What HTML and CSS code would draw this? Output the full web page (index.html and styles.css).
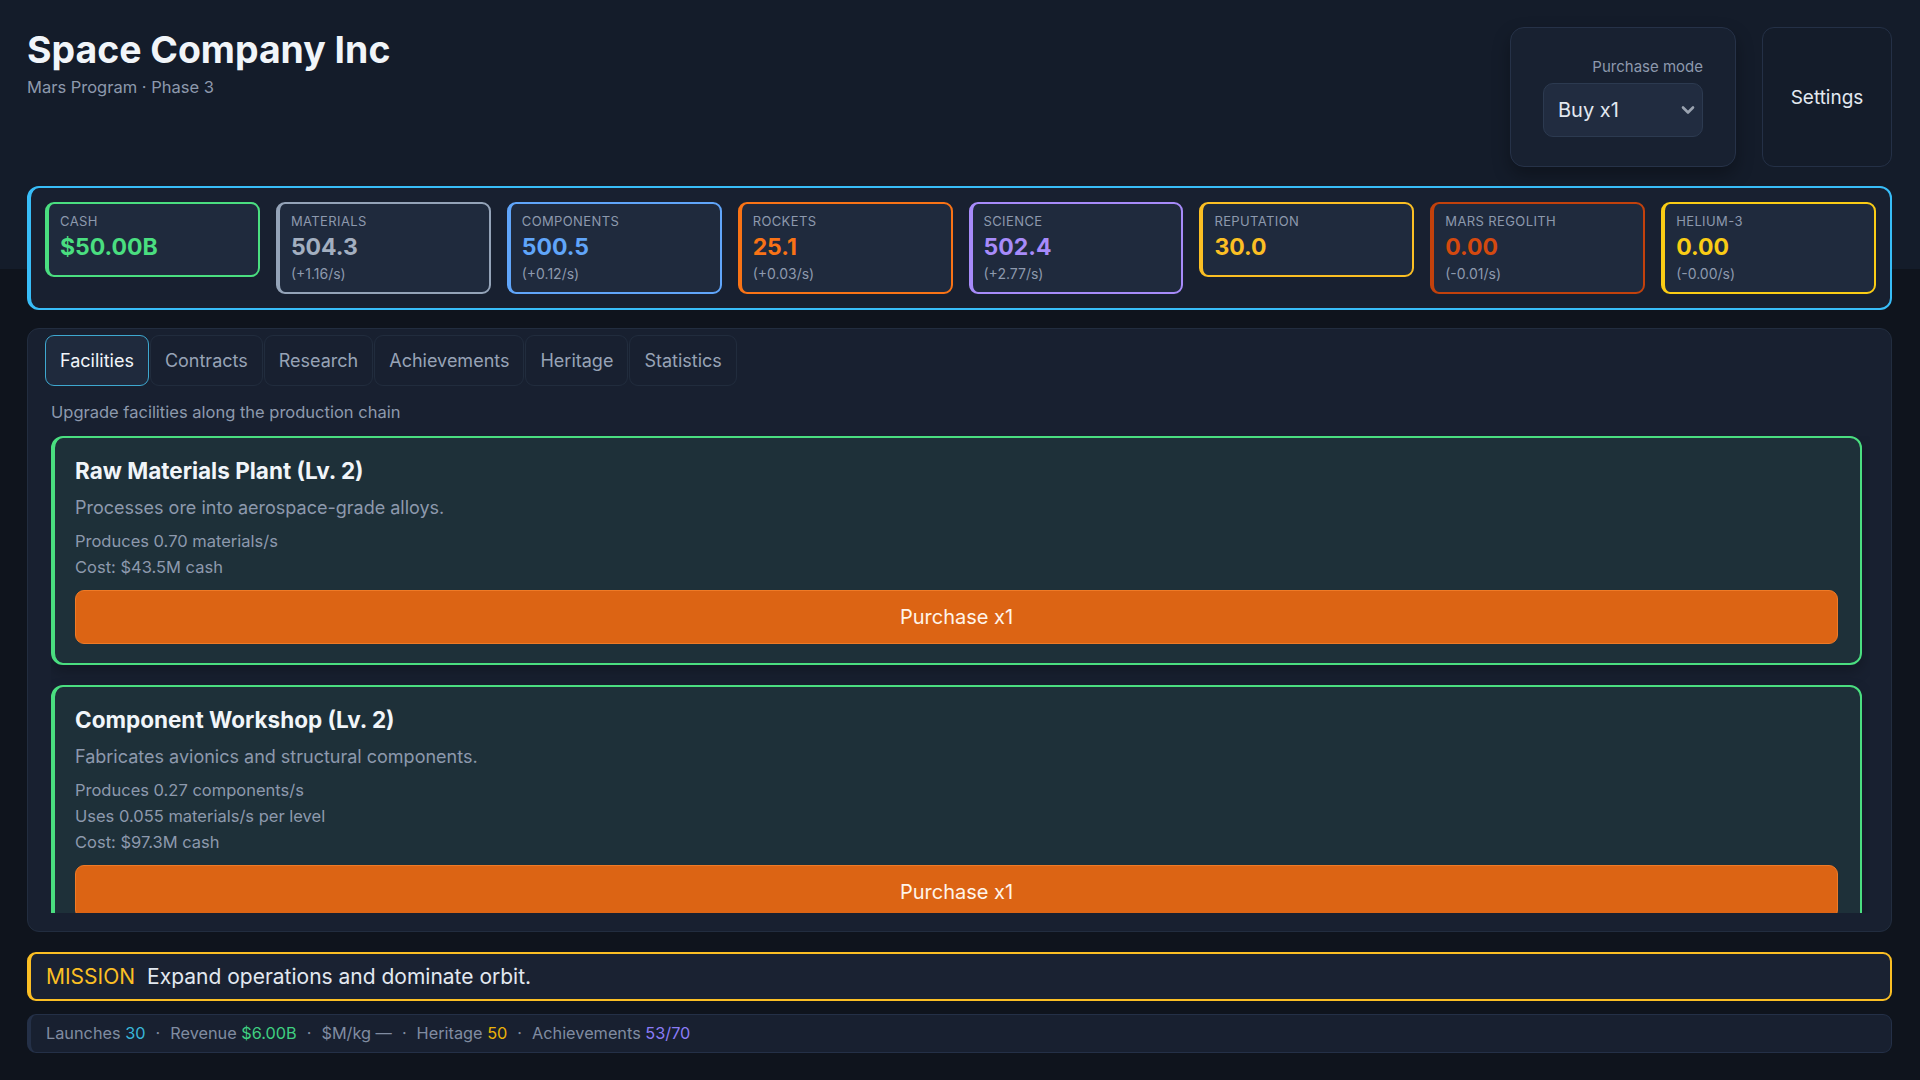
FILE: index.html
```html
<!DOCTYPE html>
<html lang="en">
<head>
    <meta charset="UTF-8">
    <meta name="viewport" content="width=device-width, initial-scale=1.0">
    <title>Space Company Inc</title>
    <link rel="stylesheet" href="styles.css">
</head>
<body>
    <div class="app">
        <header class="header">
            <div class="brand">
                <h1>Space Company Inc</h1>
                <p>Mars Program · Phase 3</p>
            </div>
            <div class="header-actions">
                <div class="mode-box">
                    <label for="buyMode">Purchase mode</label>
                    <div class="select-wrap">
                        <select id="buyMode">
                            <option>Buy x1</option>
                            <option>Buy x10</option>
                            <option>Buy x100</option>
                            <option>Buy max</option>
                        </select>
                        <svg class="chevron" width="16" height="16" viewBox="0 0 16 16" aria-hidden="true">
                            <path d="M3 5.5 L8 10.5 L13 5.5" fill="none" stroke="currentColor" stroke-width="2.6" stroke-linecap="round" stroke-linejoin="round"/>
                        </svg>
                    </div>
                </div>
                <button class="settings-btn">Settings</button>
            </div>
        </header>

        <section class="resources">
            <div class="res res-cash">
                <span class="res-label">Cash</span>
                <span class="res-value">$50.00B</span>
            </div>
            <div class="res res-materials">
                <span class="res-label">Materials</span>
                <span class="res-value">504.3</span>
                <span class="res-rate">(+1.16/s)</span>
            </div>
            <div class="res res-components">
                <span class="res-label">Components</span>
                <span class="res-value">500.5</span>
                <span class="res-rate">(+0.12/s)</span>
            </div>
            <div class="res res-rockets">
                <span class="res-label">Rockets</span>
                <span class="res-value">25.1</span>
                <span class="res-rate">(+0.03/s)</span>
            </div>
            <div class="res res-science">
                <span class="res-label">Science</span>
                <span class="res-value">502.4</span>
                <span class="res-rate">(+2.77/s)</span>
            </div>
            <div class="res res-reputation">
                <span class="res-label">Reputation</span>
                <span class="res-value">30.0</span>
            </div>
            <div class="res res-regolith">
                <span class="res-label">Mars Regolith</span>
                <span class="res-value">0.00</span>
                <span class="res-rate">(-0.01/s)</span>
            </div>
            <div class="res res-helium">
                <span class="res-label">Helium-3</span>
                <span class="res-value">0.00</span>
                <span class="res-rate">(-0.00/s)</span>
            </div>
        </section>

        <main class="panel">
            <nav class="tabs">
                <button class="tab active">Facilities</button>
                <button class="tab">Contracts</button>
                <button class="tab">Research</button>
                <button class="tab">Achievements</button>
                <button class="tab">Heritage</button>
                <button class="tab">Statistics</button>
            </nav>

            <div class="tab-body">
                <p class="tab-hint">Upgrade facilities along the production chain</p>

                <div class="facility-list">
                    <div class="facility ready">
                        <h3>Raw Materials Plant (Lv. 2)</h3>
                        <p class="facility-desc">Processes ore into aerospace-grade alloys.</p>
                        <ul class="facility-info">
                            <li>Produces 0.70 materials/s</li>
                            <li>Cost: $43.5M cash</li>
                        </ul>
                        <button class="buy-btn">Purchase x1</button>
                    </div>
                    <div class="facility ready">
                        <h3>Component Workshop (Lv. 2)</h3>
                        <p class="facility-desc">Fabricates avionics and structural components.</p>
                        <ul class="facility-info">
                            <li>Produces 0.27 components/s</li>
                            <li>Uses 0.055 materials/s per level</li>
                            <li>Cost: $97.3M cash</li>
                        </ul>
                        <button class="buy-btn">Purchase x1</button>
                    </div>
                    <div class="facility ready">
                        <h3>Rocket Assembly Hall (Lv. 1)</h3>
                        <p class="facility-desc">Integrates stages, engines and payload fairings.</p>
                        <ul class="facility-info">
                            <li>Produces 0.03 rockets/s</li>
                            <li>Uses 0.12 components/s per level</li>
                            <li>Cost: $212.0M cash</li>
                        </ul>
                        <button class="buy-btn">Purchase x1</button>
                    </div>
                    <div class="facility ready">
                        <h3>Research Lab (Lv. 3)</h3>
                        <p class="facility-desc">Turns flight data into new technology.</p>
                        <ul class="facility-info">
                            <li>Produces 2.77 science/s</li>
                            <li>Cost: $64.8M cash</li>
                        </ul>
                        <button class="buy-btn">Purchase x1</button>
                    </div>
                    <div class="facility ready">
                        <h3>Launch Pad (Lv. 1)</h3>
                        <p class="facility-desc">Sends finished rockets to orbit for contract revenue.</p>
                        <ul class="facility-info">
                            <li>Launches 0.01 rockets/s</li>
                            <li>Cost: $340.0M cash</li>
                        </ul>
                        <button class="buy-btn">Purchase x1</button>
                    </div>
                    <div class="facility ready">
                        <h3>Mission Control (Lv. 1)</h3>
                        <p class="facility-desc">Coordinates launches and raises public reputation.</p>
                        <ul class="facility-info">
                            <li>Produces 0.02 reputation/s</li>
                            <li>Cost: $180.5M cash</li>
                        </ul>
                        <button class="buy-btn">Purchase x1</button>
                    </div>
                    <div class="facility ready">
                        <h3>Engine Test Stand (Lv. 1)</h3>
                        <p class="facility-desc">Hot-fires engines before integration.</p>
                        <ul class="facility-info">
                            <li>Boosts rocket output by 5% per level</li>
                            <li>Cost: $420.0M cash</li>
                        </ul>
                        <button class="buy-btn">Purchase x1</button>
                    </div>
                    <div class="facility ready">
                        <h3>Satellite Factory (Lv. 0)</h3>
                        <p class="facility-desc">Builds communication satellites for orbital contracts.</p>
                        <ul class="facility-info">
                            <li>Produces 0.00 satellites/s</li>
                            <li>Uses 0.20 components/s per level</li>
                            <li>Cost: $560.0M cash</li>
                        </ul>
                        <button class="buy-btn">Purchase x1</button>
                    </div>
                    <div class="facility ready">
                        <h3>Orbital Station (Lv. 0)</h3>
                        <p class="facility-desc">A permanent foothold in low Earth orbit.</p>
                        <ul class="facility-info">
                            <li>Produces 0.00 science/s</li>
                            <li>Cost: $1.20B cash</li>
                        </ul>
                        <button class="buy-btn">Purchase x1</button>
                    </div>
                    <div class="facility ready">
                        <h3>Lunar Base (Lv. 0)</h3>
                        <p class="facility-desc">Staging post for deep space operations.</p>
                        <ul class="facility-info">
                            <li>Produces 0.00 helium-3/s</li>
                            <li>Cost: $2.40B cash</li>
                        </ul>
                        <button class="buy-btn">Purchase x1</button>
                    </div>
                    <div class="facility ready">
                        <h3>Mars Outpost (Lv. 0)</h3>
                        <p class="facility-desc">First crewed habitat on the red planet.</p>
                        <ul class="facility-info">
                            <li>Produces 0.00 reputation/s</li>
                            <li>Cost: $4.80B cash</li>
                        </ul>
                        <button class="buy-btn">Purchase x1</button>
                    </div>
                    <div class="facility ready">
                        <h3>Regolith Extractor (Lv. 0)</h3>
                        <p class="facility-desc">Mines Martian soil for local construction.</p>
                        <ul class="facility-info">
                            <li>Produces 0.00 regolith/s</li>
                            <li>Cost: $3.10B cash</li>
                        </ul>
                        <button class="buy-btn">Purchase x1</button>
                    </div>
                    <div class="facility ready">
                        <h3>Helium-3 Refinery (Lv. 0)</h3>
                        <p class="facility-desc">Separates fusion fuel from lunar dust.</p>
                        <ul class="facility-info">
                            <li>Produces 0.00 helium-3/s</li>
                            <li>Uses 0.10 regolith/s per level</li>
                            <li>Cost: $6.50B cash</li>
                        </ul>
                        <button class="buy-btn">Purchase x1</button>
                    </div>
                    <div class="facility ready">
                        <h3>Deep Space Network (Lv. 0)</h3>
                        <p class="facility-desc">Keeps contact with probes beyond Mars.</p>
                        <ul class="facility-info">
                            <li>Produces 0.00 science/s</li>
                            <li>Cost: $8.00B cash</li>
                        </ul>
                        <button class="buy-btn">Purchase x1</button>
                    </div>
                    <div class="facility ready">
                        <h3>Fusion Plant (Lv. 0)</h3>
                        <p class="facility-desc">Burns helium-3 to power every other facility.</p>
                        <ul class="facility-info">
                            <li>Boosts all output by 2% per level</li>
                            <li>Cost: $12.0B cash</li>
                        </ul>
                        <button class="buy-btn">Purchase x1</button>
                    </div>
                    <div class="facility ready">
                        <h3>Interplanetary Shipyard (Lv. 0)</h3>
                        <p class="facility-desc">Assembles crewed ships in orbit.</p>
                        <ul class="facility-info">
                            <li>Produces 0.00 rockets/s</li>
                            <li>Cost: $25.0B cash</li>
                        </ul>
                        <button class="buy-btn">Purchase x1</button>
                    </div>
                </div>
            </div>
        </main>

        <div class="mission">
            <span class="mission-label">MISSION</span>
            <span class="mission-text">Expand operations and dominate orbit.</span>
        </div>

        <footer class="summary">
            Launches <span class="v-cyan">30</span><span class="sep">·</span>Revenue <span class="v-green">$6.00B</span><span class="sep">·</span>$M/kg —<span class="sep">·</span>Heritage <span class="v-amber">50</span><span class="sep">·</span>Achievements <span class="v-purple">53/70</span>
        </footer>
    </div>
</body>
</html>
```

FILE: styles.css
```css
:root {
    --bg-top: #141c2a;
    --bg: #0f141d;
    --panel: #182030;
    --panel-border: #222d3f;
    --card: #1f2a3d;
    --text: #e2e8f0;
    --muted: #8d99ad;
    --cyan: #38bdf8;
    --green: #4ade80;
    --orange: #dc6414;
    --amber: #fbbf24;
}

* {
    margin: 0;
    padding: 0;
    box-sizing: border-box;
}

body {
    background: linear-gradient(to bottom, var(--bg-top) 0, var(--bg-top) 269px, var(--bg) 269px);
    color: var(--text);
    font-family: Inter, 'Noto Sans', sans-serif;
}

.app {
    height: 100vh;
    display: flex;
    flex-direction: column;
    padding: 27px 28px 27px 27px;
}

/* header */

.header {
    display: flex;
    justify-content: space-between;
    align-items: flex-start;
    margin-bottom: 19px;
}

.brand h1 {
    font-size: 37.4px;
    font-weight: 700;
    line-height: 46px;
    color: #f1f5f9;
}

.brand p {
    margin-top: 3px;
    font-size: 16.5px;
    line-height: 22px;
    color: var(--muted);
}

.header-actions {
    display: flex;
    gap: 26px;
    height: 140px;
}

.mode-box {
    display: flex;
    flex-direction: column;
    align-items: flex-end;
    padding: 29px 32px;
    background-color: #182131;
    border: 1px solid #263248;
    border-radius: 14px;
    box-shadow: 0 8px 18px rgba(0,0,0,0.3);
}

.mode-box label {
    font-size: 15px;
    line-height: 20px;
    color: var(--muted);
    margin-bottom: 6px;
}

.select-wrap {
    position: relative;
}

.select-wrap select {
    appearance: none;
    width: 160px;
    height: 54px;
    padding: 0 14px;
    background-color: #212c40;
    border: 1px solid #2c3a50;
    border-radius: 10px;
    color: var(--text);
    font-family: inherit;
    font-size: 20px;
}

.chevron {
    position: absolute;
    right: 7px;
    top: 19px;
    color: #9aa3b0;
    pointer-events: none;
}

.settings-btn {
    width: 130px;
    background: transparent;
    border: 1px solid #243046;
    border-radius: 12px;
    color: var(--text);
    font-family: inherit;
    font-size: 19px;
    cursor: pointer;
}

/* resource strip */

.resources {
    display: grid;
    grid-template-columns: repeat(8, 1fr);
    gap: 16px;
    align-items: start;
    padding: 14px;
    background-color: var(--panel);
    border: 2px solid var(--cyan);
    border-left-width: 4px;
    border-radius: 12px;
    margin-bottom: 18px;
}

.res {
    display: flex;
    flex-direction: column;
    padding: 9px 12px 10px 11px;
    background-color: var(--card);
    border: 2px solid;
    border-left-width: 4px;
    border-radius: 9px;
}

.res-label {
    font-size: 13px;
    line-height: 16px;
    letter-spacing: 0.03em;
    text-transform: uppercase;
    color: var(--muted);
}

.res-value {
    margin: 5px 0 4px;
    font-size: 23px;
    font-weight: 700;
    line-height: 27px;
}

.res-rate {
    font-size: 14px;
    line-height: 17px;
    color: var(--muted);
}

.res-cash { border-color: #4ade80; color: #4ade80; }
.res-materials { border-color: #94a3b8; color: #a3afc0; }
.res-components { border-color: #60a5fa; color: #60a5fa; }
.res-rockets { border-color: #f97316; color: #f97316; }
.res-science { border-color: #a78bfa; color: #a78bfa; }
.res-reputation { border-color: #fbbf24; color: #fbbf24; }
.res-regolith { border-color: #c2410c; color: #d4490f; }
.res-helium { border-color: #facc15; color: #facc15; }

/* main panel */

.panel {
    flex: 1;
    min-height: 0;
    display: flex;
    flex-direction: column;
    padding: 6px 17px 18px;
    background-color: var(--panel);
    border: 1px solid var(--panel-border);
    border-radius: 12px;
    margin-bottom: 20px;
}

.tabs {
    display: flex;
    gap: 1px;
    margin-bottom: 15px;
}

.tab {
    padding: 13px 14px;
    background: transparent;
    border: 1px solid #212c3d;
    border-radius: 9px;
    color: #97a3b6;
    font-family: inherit;
    font-size: 18px;
    line-height: 23px;
    cursor: pointer;
}

.tab.active {
    background-color: var(--card);
    border-color: #3ea8d0;
    color: #f1f5f9;
}

.tab-body {
    flex: 1;
    min-height: 0;
    display: flex;
    flex-direction: column;
    padding: 0 4px 0 6px;
}

.tab-hint {
    font-size: 16.5px;
    line-height: 22px;
    color: var(--muted);
    margin-bottom: 13px;
}

.facility-list {
    flex: 1;
    min-height: 0;
    overflow-y: auto;
    display: flex;
    flex-direction: column;
    gap: 20px;
    padding-right: 8px;
}

.facility-list::-webkit-scrollbar {
    width: 8px;
}

.facility-list::-webkit-scrollbar-track {
    background: transparent;
    margin: 4px 0;
}

.facility-list::-webkit-scrollbar-thumb {
    background-color: #334155;
    border: 1px solid transparent;
    background-clip: padding-box;
    border-radius: 4px;
}

.facility {
    flex-shrink: 0;
    padding: 19px 22px 19px 20px;
    background-color: #1e3039;
    border: 2px solid #2f3b4f;
    border-left-width: 4px;
    border-radius: 12px;
    box-shadow: 0 6px 14px rgba(0,0,0,0.25);
}

.facility.ready {
    border-color: var(--green);
}

.facility h3 {
    font-size: 22.5px;
    font-weight: 700;
    line-height: 28px;
    color: #f1f5f9;
}

.facility-desc {
    margin-top: 10px;
    font-size: 18px;
    line-height: 25px;
    color: var(--muted);
}

.facility-info {
    list-style: none;
    margin: 8px 0 10px;
    font-size: 16.5px;
    line-height: 26px;
    color: var(--muted);
}

.buy-btn {
    width: 100%;
    padding: 14px;
    background-color: var(--orange);
    border: 1px solid #ef7a26;
    border-radius: 9px;
    color: #fff4ea;
    font-family: inherit;
    font-size: 20px;
    line-height: 24px;
    cursor: pointer;
}

/* bottom bars */

.mission {
    display: flex;
    align-items: baseline;
    padding: 10px 16px 10px 15px;
    background-color: #1a2232;
    border: 2px solid var(--amber);
    border-left-width: 4px;
    border-radius: 9px;
    font-size: 21px;
    line-height: 25px;
    margin-bottom: 13px;
}

.mission-label {
    color: var(--amber);
    margin-right: 12px;
}

.mission-text {
    color: var(--text);
}

.summary {
    padding: 8px 16px 8px 15px;
    background-color: var(--panel);
    border: 1px solid #243047;
    border-left-width: 4px;
    border-radius: 9px;
    font-size: 16.3px;
    line-height: 21px;
    color: #808ca1;
}

.sep {
    margin: 0 10px;
}

.v-cyan { color: #38b6d8; }
.v-green { color: #3fcf80; }
.v-amber { color: #eab308; }
.v-purple { color: #8b7cf6; }
```
